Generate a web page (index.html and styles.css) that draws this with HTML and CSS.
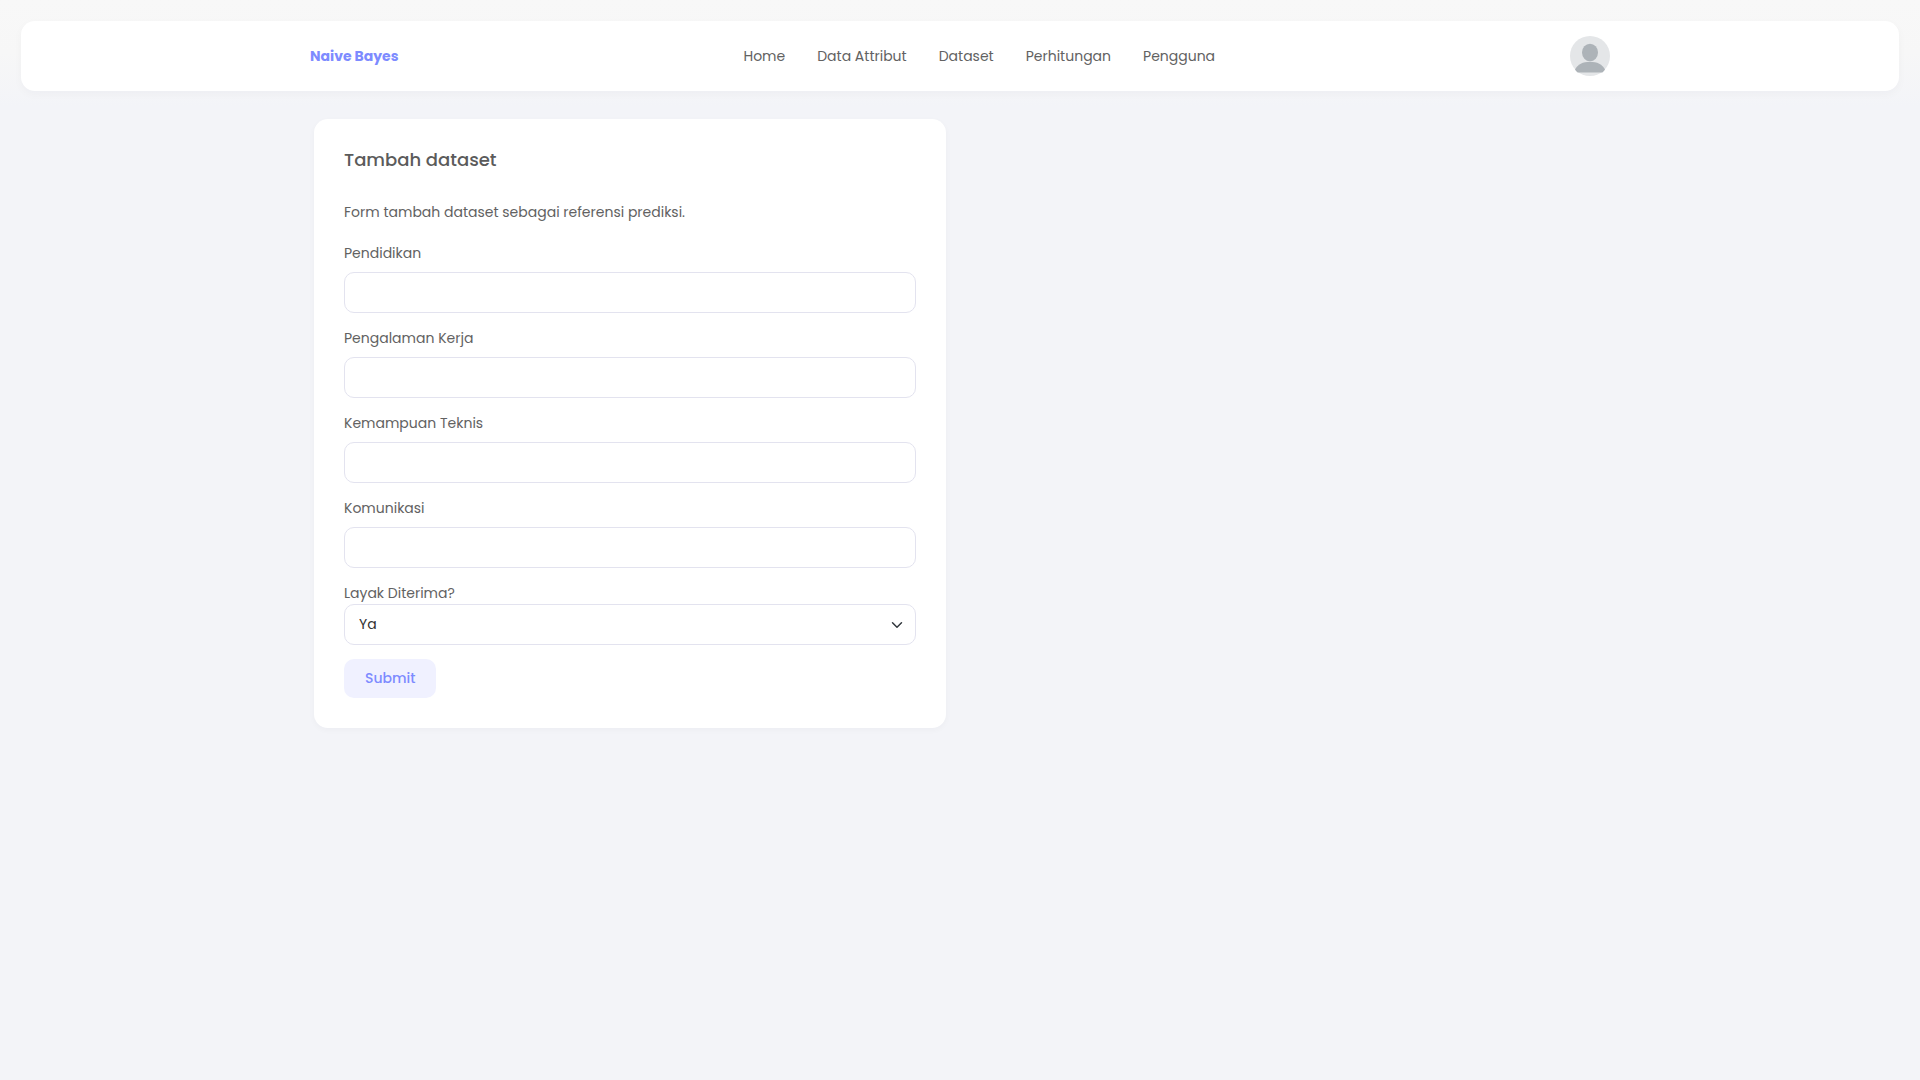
FILE: index.html
```html
<!DOCTYPE html>
<html lang="id">
<head>
<meta charset="utf-8">
<meta name="viewport" content="width=device-width, initial-scale=1">
<title>Tambah dataset - Naive Bayes</title>
<link rel="stylesheet" href="styles.css">
</head>
<body>
<header class="page-header">
  <div class="navbar">
    <div class="container navbar-inner">
      <a class="brand" href="#">Naive Bayes</a>
      <nav class="menu">
        <a href="#">Home</a>
        <a href="#">Data Attribut</a>
        <a href="#">Dataset</a>
        <a href="#">Perhitungan</a>
        <a href="#">Pengguna</a>
      </nav>
      <button class="avatar" type="button" aria-label="Akun">
        <svg viewBox="0 0 40 40" aria-hidden="true">
          <circle cx="20" cy="20" r="20" fill="#e4e6e8"/>
          <ellipse cx="20" cy="16.5" rx="8" ry="8.7" fill="#adb3b8"/>
          <path d="M5 33.500C7.500 28.500 13 25.800 20 25.800S32.500 28.500 35 33.500C34 35 33.200 36 32.300 36.400H7.700C6.800 36 6 35 5 33.500Z" fill="#adb3b8"/>
        </svg>
      </button>
    </div>
  </div>
</header>
<main class="container content">
  <section class="card">
    <h1 class="card-title">Tambah dataset</h1>
    <p class="card-text">Form tambah dataset sebagai referensi prediksi.</p>
    <form>
      <div class="field">
        <label for="pendidikan">Pendidikan</label>
        <input class="control" id="pendidikan" type="text">
      </div>
      <div class="field">
        <label for="pengalaman">Pengalaman Kerja</label>
        <input class="control" id="pengalaman" type="text">
      </div>
      <div class="field">
        <label for="teknis">Kemampuan Teknis</label>
        <input class="control" id="teknis" type="text">
      </div>
      <div class="field">
        <label for="komunikasi">Komunikasi</label>
        <input class="control" id="komunikasi" type="text">
      </div>
      <div class="field field-tight">
        <label for="layak">Layak Diterima?</label>
        <select class="control select" id="layak">
          <option>Ya</option>
          <option>Tidak</option>
        </select>
      </div>
      <button class="submit" type="submit">Submit</button>
    </form>
  </section>
</main>
</body>
</html>
```
FILE: styles.css
```css
* { box-sizing: border-box; }

body {
  margin: 0;
  min-height: 100vh;
  background: #f3f4f8;
  color: #626262;
  font-family: Poppins, Inter, sans-serif;
  font-size: 14px;
  line-height: 22px;
}

a { color: inherit; text-decoration: none; }

.container {
  width: 100%;
  max-width: 1300px;
  margin: 0 auto;
}

.page-header {
  padding: 21px 21px 28px;
  background: linear-gradient(180deg, #f8f8f8 0, #f7f7f7 44%, #f3f4f8 90%);
}

.navbar {
  padding: 15px;
  border-radius: 14px;
  background: #fff;
  box-shadow: 0 3px 10px rgba(0, 0, 60, 0.03);
}

.navbar-inner {
  display: flex;
  align-items: center;
  justify-content: space-between;
  gap: 24px;
}

.brand { color: #7d8bff; font-weight: 700; }

.menu {
  display: flex;
  flex-wrap: wrap;
  gap: 32px;
  padding-right: 10px;
}

.avatar {
  width: 40px;
  height: 40px;
  padding: 0;
  border: 0;
  border-radius: 50%;
  background: none;
}

.avatar svg { display: block; }

.content {
  display: grid;
  grid-template-columns: repeat(auto-fit, minmax(min(100%, 480px), 632px));
  gap: 28px;
  padding: 0 4px 28px;
}

.card {
  padding: 30px;
  border-radius: 14px;
  background: #fff;
  box-shadow: 0 2px 6px rgba(0, 0, 60, 0.03);
}

.card-title {
  margin: 0 0 30px;
  color: #5b5b5b;
  font-size: 18px;
  font-weight: 500;
  line-height: 22px;
}

.card-text { margin: 0 0 19px; }

.field {
  display: flex;
  flex-direction: column;
  gap: 8px;
  margin-bottom: 14px;
}

.field-tight { gap: 0; }

.control {
  width: 100%;
  height: 41px;
  padding: 0 14px 1px;
  border: 1px solid #e3e3ef;
  border-radius: 10px;
  background-color: #fff;
  color: #333;
  font: inherit;
}

.select {
  appearance: none;
  background-image: url("data:image/svg+xml,%3Csvg xmlns='http://www.w3.org/2000/svg' viewBox='0 0 16 16'%3E%3Cpath fill='none' stroke='%23343a40' stroke-linecap='round' stroke-linejoin='round' stroke-width='2' d='M2 5l6 6 6-6'/%3E%3C/svg%3E");
  background-repeat: no-repeat;
  background-position: right 12px center;
  background-size: 12px;
}

.submit {
  display: block;
  height: 39px;
  padding: 0 21px 2px;
  border: 0;
  border-radius: 10px;
  background: #f0f1ff;
  color: #7d8bff;
  font: inherit;
  font-weight: 500;
}
```
